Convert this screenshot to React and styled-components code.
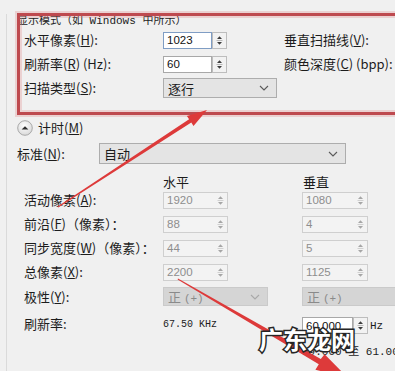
import React from "react"
import styled, { createGlobalStyle } from "styled-components"

const CJK = `"Noto Sans CJK SC", "Noto Sans", sans-serif`
const MONO = `"Liberation Mono", "Noto Sans CJK SC", monospace`
const NUM = `"Liberation Sans", "Noto Sans CJK SC", sans-serif`

const GlobalStyle = createGlobalStyle`
  html, body {
    margin: 0;
    padding: 0;
    background: #f0f0f0;
  }
  body {
    font-family: ${CJK};
    color: #1c1c1c;
  }
`

const Arrows = () => (
  <ArrowLayer viewBox="0 0 395 371" width="395" height="371">
    <polygon
      fill="#dd3a3a"
      points="57.7,206.6 189.1,119.2 186.9,115.9 207,110 193.5,125.9 191.3,122.6 58.3,207.4"
    />
    <polygon
      fill="#dd3a3a"
      points="178,278.6 320.8,359 324.6,354.3 348,378 315.4,369.7 318.8,364.2 177.6,279.5"
    />
  </ArrowLayer>
)

const SpinIcon = ({ disabled }) => (
  <svg width="13" height="15" viewBox="0 0 13 15">
    <polygon points="4,6 6.5,3.3 9,6" fill={disabled ? "#a6a6a6" : "#3c3c3c"} />
    <line x1="3.5" y1="7.5" x2="9.5" y2="7.5" stroke={disabled ? "#d0d0d0" : "#b8b8b8"} />
    <polygon points="4,9 6.5,11.7 9,9" fill={disabled ? "#a6a6a6" : "#3c3c3c"} />
  </svg>
)

const Chevron = ({ disabled }) => (
  <svg width="10" height="6" viewBox="0 0 10 6">
    <polyline
      points="1,1 5,5 9,1"
      fill="none"
      stroke={disabled ? "#a8a8a8" : "#5a5a5a"}
      strokeWidth="1.1"
    />
  </svg>
)

const CollapseIcon = () => (
  <svg width="16" height="16" viewBox="0 0 16 16">
    <defs>
      <radialGradient id="cg" cx="0.45" cy="0.35" r="0.7">
        <stop offset="0" stopColor="#ffffff" />
        <stop offset="1" stopColor="#d6d6d6" />
      </radialGradient>
    </defs>
    <circle cx="8" cy="8" r="7.3" fill="url(#cg)" stroke="#a9a9a9" />
    <polygon points="4.6,9.6 8,6.2 11.4,9.6" fill="#2e2e2e" />
  </svg>
)

const SpinField = ({ value, width, disabled, focused }) => (
  <FieldRow $width={width}>
    <FieldBox $disabled={disabled} $focused={focused}>
      {value}
    </FieldBox>
    <SpinBox $disabled={disabled}>
      <SpinIcon disabled={disabled} />
    </SpinBox>
  </FieldRow>
)

const Select = ({ children, width, height = 20, disabled }) => (
  <SelectBox $width={width} $height={height} $disabled={disabled}>
    <span>{children}</span>
    <Chevron disabled={disabled} />
  </SelectBox>
)

export default function App() {
  return (
    <Page>
      <GlobalStyle />
      <Frame>
        <GroupTitle>显示模式（如 Windows 中所示）</GroupTitle>
        <ModeGrid>
          <Label>
            水平像素(<U>H</U>):
          </Label>
          <SpinField value="1023" width={64} focused />
          <span />
          <Label>
            垂直扫描线(<U>V</U>):
          </Label>

          <Label>
            刷新率(<U>R</U>) (Hz):
          </Label>
          <SpinField value="60" width={64} />
          <span />
          <Label>
            颜色深度(<U>C</U>) (bpp):
          </Label>

          <Label>
            扫描类型(<U>S</U>):
          </Label>
          <WideCell>
            <Select width={114} height={20}>逐行</Select>
          </WideCell>
        </ModeGrid>

        <TimingHead>
          <CollapseIcon />
          <Label>
            计时(<U>M</U>)
          </Label>
        </TimingHead>

        <StandardRow>
          <StandardLabel>
            标准(<U>N</U>):
          </StandardLabel>
          <Select width={247} height={21}>
            自动
          </Select>
        </StandardRow>

        <ColHeads>
          <Label>水平</Label>
          <Label>垂直</Label>
        </ColHeads>

        <TimingGrid>
          <Label>
            活动像素(<U>A</U>):
          </Label>
          <SpinField value="1920" width={65} disabled />
          <SpinField value="1080" width={66} disabled />

          <Label>
            前沿(<U>F</U>)（像素）：
          </Label>
          <SpinField value="88" width={65} disabled />
          <SpinField value="4" width={66} disabled />

          <Label>
            同步宽度(<U>W</U>)（像素）：
          </Label>
          <SpinField value="44" width={65} disabled />
          <SpinField value="5" width={66} disabled />

          <Label>
            总像素(<U>X</U>):
          </Label>
          <SpinField value="2200" width={65} disabled />
          <SpinField value="1125" width={66} disabled />

          <Label>
            极性(<U>Y</U>):
          </Label>
          <Select width={105} height={19} disabled>
            正 <Mono>(+)</Mono>
          </Select>
          <Select width={120} height={19} disabled>
            正 <Mono>(+)</Mono>
          </Select>

          <Label>刷新率:</Label>
          <Reading>67.50 KHz</Reading>
          <UnitRow>
            <SpinField value="60.000" width={66} />
            <Reading>Hz</Reading>
          </UnitRow>

          <span />
          <span />
          <Range>59.000 至 61.000</Range>
        </TimingGrid>
      </Frame>

      <RedBox />
      <Arrows />
      <Watermark>广东龙网</Watermark>
    </Page>
  )
}

const Page = styled.div`
  position: relative;
  width: 395px;
  height: 371px;
  overflow: hidden;
  padding-left: 6px;
  box-sizing: border-box;
  background: #f0f0f0;
`

const Frame = styled.div`
  height: 368px;
  box-sizing: border-box;
  border-left: 1px solid #dadada;
  border-bottom: 1px solid #d2d2d2;
`

const GroupTitle = styled.div`
  margin: 14px 0 0 10px;
  height: 14px;
  font-family: ${MONO};
  font-size: 11px;
  line-height: 15px;
  white-space: nowrap;
  color: #222;
`

const ModeGrid = styled.div`
  margin-left: 17px;
  display: grid;
  grid-template-columns: 139px 64px 57px 1fr;
  grid-auto-rows: 24px;
  align-items: center;
`

const WideCell = styled.div`
  grid-column: 2 / span 3;
`

const Label = styled.span`
  font-family: ${CJK};
  font-size: 13px;
  line-height: 16px;
  white-space: nowrap;
  color: #1c1c1c;
`

const U = styled.span`
  text-decoration: underline;
  text-underline-offset: 1px;
`

const Mono = styled.span`
  font-family: ${MONO};
  font-size: 11px;
`

const FieldRow = styled.div`
  display: flex;
  width: ${(p) => p.$width}px;
  height: 17px;
`

const FieldBox = styled.div`
  flex: 1;
  display: flex;
  align-items: center;
  padding-left: 3px;
  box-sizing: border-box;
  height: 17px;
  background: ${(p) => (p.$disabled ? "#f3f3f3" : "#ffffff")};
  border: 1px solid
    ${(p) => (p.$focused ? "#7f9dc4" : p.$disabled ? "#cfcfcf" : "#a8a8a8")};
  border-right: ${(p) => (p.$disabled ? "none" : undefined)};
  font-family: ${NUM};
  font-size: 11.5px;
  color: ${(p) => (p.$disabled ? "#8e8e8e" : "#111")};
`

const SpinBox = styled.div`
  width: 15px;
  height: 17px;
  box-sizing: border-box;
  display: flex;
  align-items: center;
  justify-content: center;
  background: ${(p) => (p.$disabled ? "#f3f3f3" : "#f2f2f2")};
  border: 1px solid ${(p) => (p.$disabled ? "#cfcfcf" : "#bdbdbd")};
  border-left: ${(p) => (p.$disabled ? "none" : undefined)};
`

const SelectBox = styled.div`
  display: flex;
  align-items: center;
  justify-content: space-between;
  width: ${(p) => p.$width}px;
  height: ${(p) => p.$height}px;
  box-sizing: border-box;
  padding: 0 7px 0 4px;
  background: ${(p) => (p.$disabled ? "#d5d5d5" : "#e4e4e4")};
  border: 1px solid ${(p) => (p.$disabled ? "#cacaca" : "#adadad")};
  font-family: ${CJK};
  font-size: 13px;
  white-space: nowrap;
  color: ${(p) => (p.$disabled ? "#8a8a8a" : "#1c1c1c")};
`

const TimingHead = styled.div`
  margin: 20px 0 0 10px;
  height: 16px;
  display: flex;
  align-items: center;
  gap: 5px;
`

const StandardRow = styled.div`
  margin: 7px 0 0 10px;
  height: 21px;
  display: flex;
  align-items: center;
`

const StandardLabel = styled(Label)`
  width: 82px;
`

const ColHeads = styled.div`
  margin: 10px 0 0 156px;
  height: 14px;
  display: grid;
  grid-template-columns: 140px 1fr;
  align-items: center;
`

const TimingGrid = styled.div`
  margin-left: 17px;
  display: grid;
  grid-template-columns: 139px 139px 1fr;
  grid-template-rows: 24px 24px 24px 24px 25px 30px 22px;
  align-items: center;
`

const Reading = styled.span`
  font-family: ${MONO};
  font-size: 10px;
  white-space: nowrap;
  color: #1c1c1c;
`

const UnitRow = styled.div`
  display: flex;
  align-items: center;
  gap: 2px;
  padding-top: 3px;

  ${Reading} {
    font-size: 11px;
  }
`

const Range = styled.span`
  font-family: ${MONO};
  font-size: 11px;
  white-space: nowrap;
  color: #1c1c1c;
`

const RedBox = styled.div`
  position: absolute;
  left: 17px;
  top: 13px;
  width: 390px;
  height: 102px;
  box-sizing: border-box;
  border: 3px solid #be4a4f;
  box-shadow: 0 0 0 2px rgba(222, 130, 130, 0.28),
    inset 0 0 0 2px rgba(222, 130, 130, 0.28);
  pointer-events: none;
`

const ArrowLayer = styled.svg`
  position: absolute;
  left: 0;
  top: 0;
  pointer-events: none;
`

const Watermark = styled.div`
  position: absolute;
  left: 259px;
  top: 323px;
  font-family: ${CJK};
  font-weight: 700;
  font-size: 24px;
  line-height: 32px;
  color: #ffffff;
  -webkit-text-stroke: 3px #262626;
  paint-order: stroke fill;
  white-space: nowrap;
  pointer-events: none;
`
